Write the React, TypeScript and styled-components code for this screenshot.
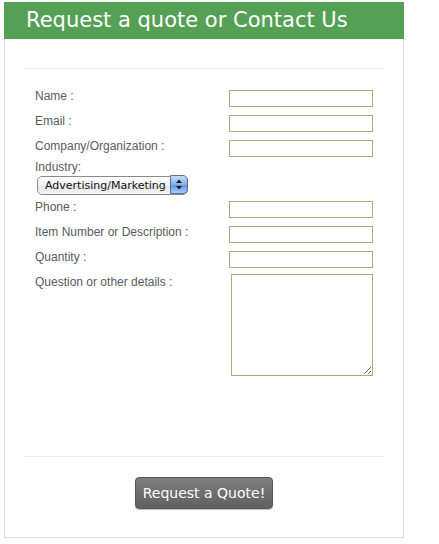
import styled, { createGlobalStyle } from "styled-components";

const GlobalStyle = createGlobalStyle`
  body {
    margin: 0;
    background: #ffffff;
    font-family: "Liberation Sans", Arial, sans-serif;
  }
`;

const Page = styled.div`
  width: 400px;
  margin: 2px 0 0 4px;
`;

const Header = styled.h2`
  margin: 0;
  height: 37px;
  padding-left: 22px;
  background: #54a054;
  color: #ffffff;
  font-family: "DejaVu Sans", Verdana, sans-serif;
  font-weight: normal;
  font-size: 21px;
  line-height: 37px;
  white-space: nowrap;
`;

const Panel = styled.div`
  border: 1px solid #dddddd;
  border-top: none;
  padding: 0 20px 28px;
  display: flex;
  flex-direction: column;
`;

const Rule = styled.div<{ $top: number }>`
  height: 1px;
  background: #ececec;
  margin-top: ${(p) => p.$top}px;
`;

const Form = styled.form`
  display: flex;
  flex-direction: column;
  padding-left: 10px;
  margin-top: 19px;
`;

const Row = styled.div<{ $h?: number }>`
  display: grid;
  grid-template-columns: 194px 144px;
  align-items: start;
  height: ${(p) => p.$h ?? 25}px;
`;

const Label = styled.label`
  padding-top: 1px;
  color: #585c60;
  font-size: 12px;
  line-height: 14px;
  white-space: nowrap;
`;

const TextInput = styled.input`
  box-sizing: border-box;
  width: 144px;
  height: 17px;
  margin: 2px 0 0;
  padding: 0 2px;
  border: 1px solid #a8ac7e;
  background: #ffffff;
  outline: none;
`;

const TextArea = styled.textarea`
  box-sizing: border-box;
  width: 142px;
  height: 102px;
  margin: 0 0 0 2px;
  padding: 2px;
  border: 1px solid #a8ac7e;
  background: #ffffff;
  outline: none;
`;

const IndustryBlock = styled.div`
  display: flex;
  flex-direction: column;
  align-items: flex-start;
  height: 40px;
`;

const SelectWrap = styled.div`
  position: relative;
  margin: 1px 0 0 2px;
  width: 151px;
  height: 19px;
`;

const Select = styled.select`
  appearance: none;
  box-sizing: border-box;
  width: 151px;
  height: 19px;
  margin: 0;
  padding: 0 20px 0 7px;
  border: 1px solid #8a8a8a;
  border-radius: 5px;
  background: linear-gradient(#ffffff, #f2f2f2 50%, #e4e4e4 51%, #f6f6f6);
  color: #111111;
  font-family: "DejaVu Sans", "Lucida Grande", sans-serif;
  font-size: 11px;
  line-height: 17px;
  outline: none;
`;

const Stepper = styled.span`
  position: absolute;
  top: 0;
  right: 0;
  width: 18px;
  height: 19px;
  box-sizing: border-box;
  border: 1px solid #5a6f95;
  border-radius: 0 5px 5px 0;
  background: linear-gradient(#c8dcf6, #86b0ec 50%, #5c93e6 51%, #a6ccf6);
  display: flex;
  align-items: center;
  justify-content: center;
  pointer-events: none;
`;

const Footer = styled.div`
  display: flex;
  justify-content: center;
  padding-top: 20px;
`;

const SubmitButton = styled.button`
  width: 138px;
  height: 32px;
  border: 1px solid #555555;
  border-radius: 4px;
  background: linear-gradient(#7e7e7e, #606060);
  box-shadow: 0 1px 1px rgba(0, 0, 0, 0.25);
  color: #ffffff;
  font-family: "DejaVu Sans", Verdana, sans-serif;
  font-size: 14px;
  cursor: pointer;
`;

const fields = [
  { label: "Name :", id: "name" },
  { label: "Email :", id: "email" },
  { label: "Company/Organization :", id: "company", h: 21 },
];

const moreFields = [
  { label: "Phone :", id: "phone" },
  { label: "Item Number or Description :", id: "item" },
  { label: "Quantity :", id: "qty" },
];

export default function App() {
  return (
    <>
      <GlobalStyle />
      <Page>
        <Header>Request a quote or Contact Us</Header>
        <Panel>
          <Rule $top={29} />
          <Form onSubmit={(e) => e.preventDefault()}>
            {fields.map((f) => (
              <Row key={f.id} $h={f.h}>
                <Label htmlFor={f.id}>{f.label}</Label>
                <TextInput id={f.id} type="text" />
              </Row>
            ))}
            <IndustryBlock>
              <Label htmlFor="industry">Industry:</Label>
              <SelectWrap>
                <Select id="industry" defaultValue="advertising">
                  <option value="advertising">Advertising/Marketing</option>
                  <option value="education">Education</option>
                  <option value="other">Other</option>
                </Select>
                <Stepper>
                  <svg width="6" height="11" viewBox="0 0 6 11">
                    <path d="M0 4 L3 0.5 L6 4 Z" fill="#1b1b1b" />
                    <path d="M0 7 L3 10.5 L6 7 Z" fill="#1b1b1b" />
                  </svg>
                </Stepper>
              </SelectWrap>
            </IndustryBlock>
            {moreFields.map((f) => (
              <Row key={f.id}>
                <Label htmlFor={f.id}>{f.label}</Label>
                <TextInput id={f.id} type="text" />
              </Row>
            ))}
            <Row $h={102}>
              <Label htmlFor="details">Question or other details :</Label>
              <TextArea id="details" />
            </Row>
          </Form>
          <Rule $top={80} />
          <Footer>
            <SubmitButton type="submit">Request a Quote!</SubmitButton>
          </Footer>
        </Panel>
      </Page>
    </>
  );
}
